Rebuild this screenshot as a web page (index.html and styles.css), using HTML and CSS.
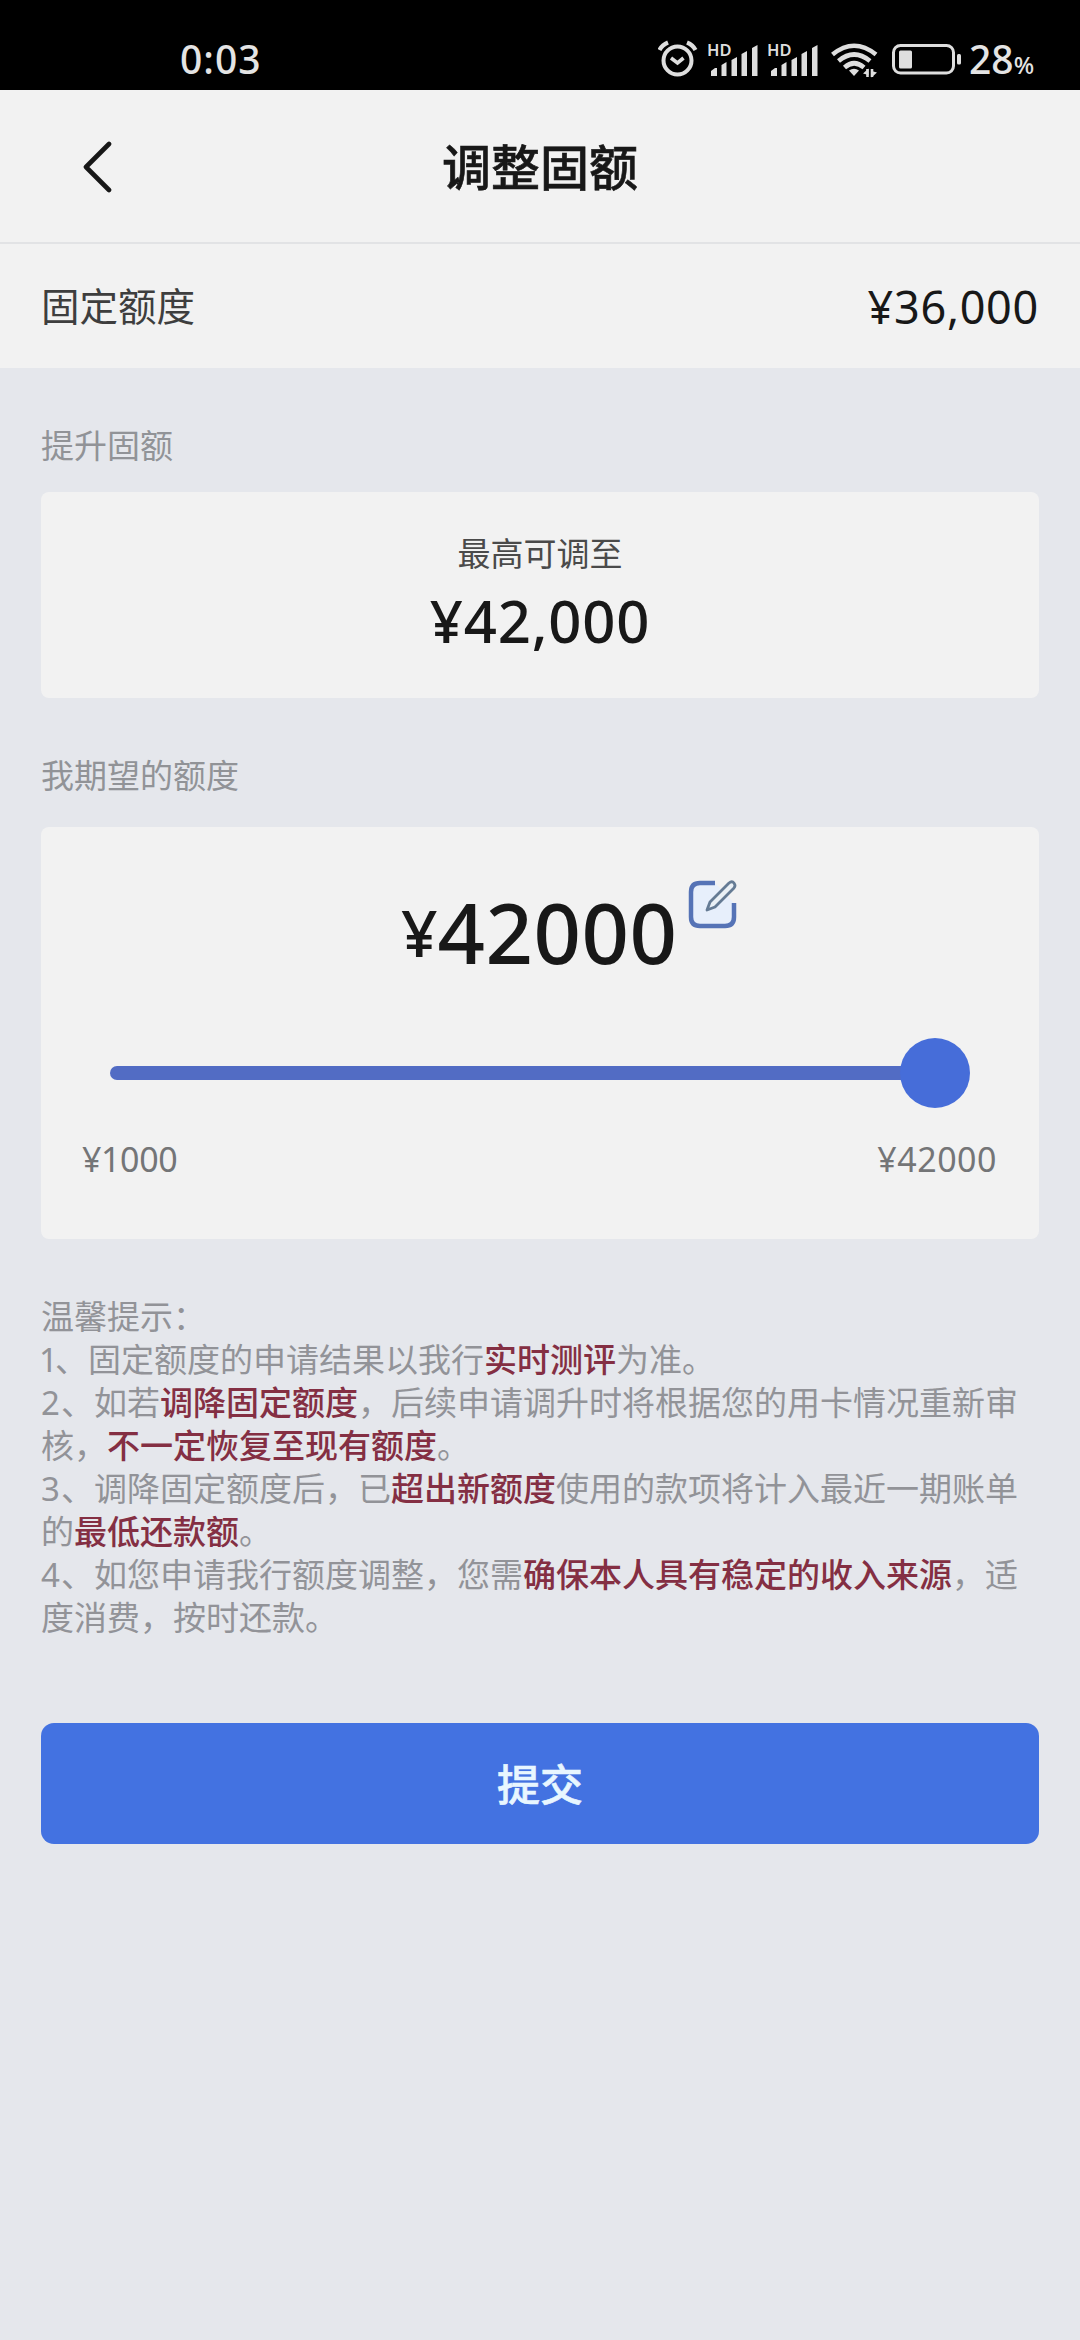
FILE: index.html
```html
<!DOCTYPE html>
<html lang="zh-CN">
<head>
<meta charset="utf-8">
<title>调整固额</title>
<link rel="stylesheet" href="styles.css">
</head>
<body>
<div class="status">
  <span class="clock">0:03</span>
  <div class="status-icons">
    <svg class="alarm" width="40" height="37" viewBox="0 0 40 37" fill="none" stroke="#dedede" stroke-width="4">
      <circle cx="19.5" cy="20.5" r="14"/>
      <path d="M13 18l6.500 5 6-5" stroke-width="3.600"/>
      <path d="M1.500 10Q4 5 10 2.500M37.500 10Q35 5 29 2.500" stroke-width="4.200"/>
    </svg>
    <svg class="signal" width="50" height="34" viewBox="0 0 50 34" fill="#dedede">
      <text x="-1" y="12.500" class="hd">HD</text>
      <path d="M3 32v-4l4-3h2v8H3zM13.500 33V22l5-3v14zM23.500 33V17l5.500-3v19zM33.500 33V11l5.500-3v25zM44 33V5l5.500-3v31z"/>
    </svg>
    <svg class="signal" width="50" height="34" viewBox="0 0 50 34" fill="#dedede">
      <text x="-1" y="12.500" class="hd">HD</text>
      <path d="M3 32v-4l4-3h2v8H3zM13.500 33V22l5-3v14zM23.500 33V17l5.500-3v19zM33.500 33V11l5.500-3v25zM44 33V5l5.500-3v31z"/>
    </svg>
    <svg class="wifi" width="47" height="36" viewBox="0 0 47 36" fill="none" stroke="#dedede" stroke-width="4.600">
      <path d="M1.500 12.500Q23 -5 45 12.500M7.500 19Q23 6 39 19M13.500 25.500Q23 17 33 25.500"/>
      <path d="M18 28.500Q23 25 28 28.500L23 34z" fill="#dedede" stroke="none"/>
      <path d="M36.500 35v-8M41 27v8" stroke-width="2.600"/>
      <path d="M32 31.500l5.500-5V33zM46 30.500l-5.500 5V29z" fill="#dedede" stroke="none"/>
    </svg>
    <svg class="battery" width="70" height="31" viewBox="0 0 70 31">
      <rect x="1.500" y="1.500" width="60" height="27.500" rx="7" fill="none" stroke="#dedede" stroke-width="3"/>
      <rect x="7" y="6.500" width="13" height="18" rx="1.500" fill="#dedede"/>
      <rect x="65" y="10" width="4" height="10.500" rx="1.500" fill="#dedede"/>
    </svg>
    <span class="percent">28<small>%</small></span>
  </div>
</div>
<header class="nav">
  <svg class="back" width="30" height="52" viewBox="0 0 30 52" fill="none" stroke="#171717" stroke-width="4.600" stroke-linecap="round" stroke-linejoin="round"><path d="M26 3L3 26l23 23"/></svg>
  <h1>调整固额</h1>
</header>
<section class="current"><span>固定额度</span><b>¥36,000</b></section>
<main>
  <h2>提升固额</h2>
  <section class="card max">
    <p>最高可调至</p>
    <strong>¥42,000</strong>
  </section>
  <h2 class="expect">我期望的额度</h2>
  <section class="card wish">
    <div class="amount">
      <span class="yen">¥</span><span class="digits">42000</span>
      <svg class="edit" width="50" height="50" viewBox="0 0 50 50" fill="none">
        <path d="M27 3H12Q3 3 3 12V37Q3 46 12 46H37Q46 46 46 37V23" fill="#e7effb" stroke="#5573b6" stroke-width="4.500"/>
        <path d="M19 30l3-8L41 3q3-2.500 5 0t0 5L27 27z" fill="#eaf0f5" stroke="#657b94" stroke-width="2.800" stroke-linejoin="round"/>
      </svg>
    </div>
    <div class="slider"><div class="track"></div><div class="knob"></div></div>
    <div class="range"><span class="low">¥1000</span><span class="high">¥42000</span></div>
  </section>
  <div class="notes">
    <p>温馨提示：</p>
    <p><i class="one">1</i>、固定额度的申请结果以我行<em>实时测评</em>为准。</p>
    <p><i>2</i>、如若<em>调降固定额度</em>，后续申请调升时将根据您的用卡情况重新审<br>核，<em>不一定恢复至现有额度</em>。</p>
    <p><i>3</i>、调降固定额度后，已<em>超出新额度</em>使用的款项将计入最近一期账单<br>的<em>最低还款额</em>。</p>
    <p><i>4</i>、如您申请我行额度调整，您需<em>确保本人具有稳定的收入来源</em>，适<br>度消费，按时还款。</p>
  </div>
  <button class="submit">提交</button>
</main>
</body>
</html>
```
FILE: styles.css
```css
* { box-sizing: border-box; margin: 0; padding: 0; }
body {
  width: 1080px;
  min-height: 2340px;
  background: #e5e7ec;
  color: #181818;
  font-family: "Noto Sans", "Noto Sans CJK SC", sans-serif;
}
.status {
  height: 90px;
  padding: 0 45px 0 180px;
  background: #000;
  color: #e4e4e4;
  display: flex;
  justify-content: space-between;
}
.clock { font-size: 39px; line-height: 36px; margin-top: 41px; font-weight: 500; letter-spacing: 1px; }
.status-icons { display: flex; align-items: flex-start; }
.alarm { margin-top: 40px; }
.signal { margin: 43px 0 0 10px; overflow: visible; }
.hd { font: 600 16.500px "Noto Sans", sans-serif; }
.wifi { margin: 42px 0 0 13px; }
.battery { margin: 44px 0 0 14px; }
.percent { width: 66px; margin: 41px 0 0 7px; font-size: 39px; line-height: 36px; font-weight: 500; white-space: nowrap; }
.percent small { font-size: 24px; }
.nav {
  height: 154px;
  padding: 2px 83px 0;
  background: #f2f2f2;
  border-bottom: 2px solid #e2e3e5;
  display: grid;
  grid-template-columns: 30px 1fr 30px;
  align-items: center;
}
.nav h1 { padding-bottom: 4px; font: 500 49px/70px "Noto Sans CJK SC", sans-serif; text-align: center; -webkit-text-stroke: 0.6px; }
.current {
  height: 124px;
  padding: 0 41px;
  background: #f2f2f2;
  display: flex;
  justify-content: space-between;
  align-items: center;
  font-size: 38.500px;
  color: #3e3e3e;
}
.current span { padding-bottom: 5px; }
.current b { font-size: 45px; font-weight: 400; color: #181818; letter-spacing: 0.7px; }
main { padding: 0 41px; }
h2 { height: 124px; padding-top: 51px; font: 400 33px/50px "Noto Sans CJK SC", sans-serif; color: #919397; }
.card { background: #f2f2f2; border-radius: 8px; }
.max { height: 206px; padding-top: 35px; text-align: center; }
.max p { font: 400 33px/50px "Noto Sans CJK SC", sans-serif; color: #4a4a4a; }
.max strong { display: block; margin-top: 4px; font-size: 58px; line-height: 80px; font-weight: 500; letter-spacing: 0.8px; }
.expect { height: 129px; }
.wish { height: 412px; padding: 53px 42px 0; }
.amount { height: 110px; padding-left: 318px; display: flex; align-items: flex-start; white-space: nowrap; }
.yen { font-size: 64px; line-height: 80px; font-weight: 500; margin-top: 13px; }
.digits { font-size: 83px; line-height: 100px; margin-top: 2px; font-weight: 500; letter-spacing: 0.5px; }
.edit { margin-left: 10px; }
.slider { height: 70px; margin: 48px 27px 0; display: flex; align-items: center; }
.track { flex: 1; height: 14px; border-radius: 7px 0 0 7px; background: #526cc4; }
.knob { width: 70px; height: 70px; margin-left: -4px; border-radius: 50%; background: #466dd9; }
.range { display: flex; justify-content: space-between; margin: 28px 0 0 -1px; font-size: 34px; line-height: 46px; color: #747577; }
.low { letter-spacing: -0.4px; }
.high { letter-spacing: 0.5px; }
.notes { margin-top: 55px; font: 400 33px/43px "Noto Sans CJK SC", sans-serif; color: #929398; white-space: nowrap; }
.notes i { display: inline-block; width: 20px; line-height: 0; font-style: normal; font-family: "Noto Sans", sans-serif; }
.notes .one { width: 14px; margin-left: -2px; margin-right: 2px; }
.notes em { font-style: normal; font-weight: 500; color: #842f43; }
.submit {
  display: block;
  width: 998px;
  height: 121px;
  margin-top: 85px;
  padding-bottom: 3px;
  border: 0;
  border-radius: 13px;
  background: #4372e1;
  color: #e8f6ff;
  font: 500 43px/60px "Noto Sans CJK SC", sans-serif;
  -webkit-text-stroke: 0.6px;
}
```
